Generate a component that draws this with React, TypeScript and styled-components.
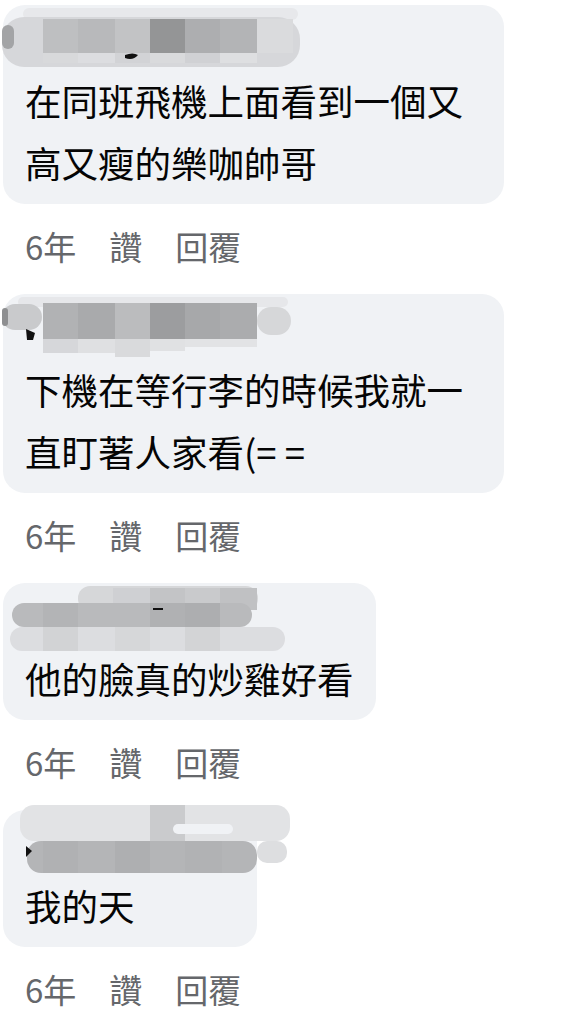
import React from "react";
import styled, { createGlobalStyle } from "styled-components";

const GlobalStyle = createGlobalStyle`
  html, body {
    margin: 0;
    padding: 0;
    background: #ffffff;
  }
  body {
    font-family: "Noto Sans CJK TC", "Noto Sans", sans-serif;
  }
`;

const Page = styled.div`
  width: 584px;
  min-height: 1024px;
  box-sizing: border-box;
  padding: 5px 0 0 3px;
  display: flex;
  flex-direction: column;
  align-items: flex-start;
  overflow: hidden;
`;

const Comment = styled.div`
  display: flex;
  flex-direction: column;
  align-items: flex-start;
  margin-bottom: 20px;
`;

const Bubble = styled.div`
  position: relative;
  max-width: 501px;
  box-sizing: border-box;
  padding: 0 22px 10px 22px;
  background: #f0f2f5;
  border-radius: 22px;
`;

const NameArea = styled.div<{ $w: number }>`
  width: ${(p) => p.$w}px;
  height: 65px;
`;

const Blur = styled.svg`
  position: absolute;
  left: 0;
  top: 0;
  overflow: visible;
  pointer-events: none;
`;

const Body = styled.div`
  font-size: 36.5px;
  line-height: 62px;
  color: #050505;
`;

const Meta = styled.div`
  display: flex;
  gap: 33px;
  margin-top: 14px;
  padding-left: 22px;
  height: 56px;
  line-height: 56px;
  font-size: 33px;
  color: #65676b;
`;

type Shape = [number, number, number, number, string, number?];

type BlurSpec = {
  shapes: Shape[];
  marks?: string[];
};

const blurs: BlurSpec[] = [
  {
    shapes: [
      [20, 3, 275, 12, "#e7e8eb", 6],
      [-1, 12, 298, 50, "#d6d7da", 22],
      [-1, 20, 12, 24, "#a3a4a6", 6],
      [40, 14, 35, 34, "#bebfc1"],
      [75, 14, 37, 34, "#b8b9bb"],
      [112, 14, 35, 34, "#c2c3c5"],
      [147, 14, 35, 34, "#949596"],
      [182, 14, 35, 34, "#adaeb0"],
      [217, 14, 37, 34, "#b3b4b6"],
      [254, 14, 36, 34, "#dadbdd"],
      [40, 48, 35, 10, "#d8d9db"],
      [75, 48, 37, 10, "#dcdde0"],
      [112, 48, 35, 10, "#d2d3d6"],
      [147, 48, 35, 10, "#d9dadc"],
      [182, 48, 35, 10, "#d0d1d4"],
      [217, 48, 37, 10, "#dedfe1"],
    ],
    marks: ["M122 50 Q130 47 135 50 Q130 56 122 53 Z"],
  },
  {
    shapes: [
      [15, 3, 270, 10, "#e6e7ea", 5],
      [-1, 10, 40, 26, "#c9cacc", 13],
      [-1, 14, 6, 18, "#8e8f91", 3],
      [40, 9, 35, 36, "#b1b2b4"],
      [75, 9, 37, 36, "#a9aaac"],
      [112, 9, 35, 36, "#bbbcbe"],
      [147, 9, 35, 36, "#9c9d9f"],
      [182, 9, 35, 36, "#a7a8aa"],
      [217, 9, 37, 36, "#abacae"],
      [254, 13, 34, 28, "#d6d7d9", 14],
      [40, 45, 35, 14, "#d6d7da"],
      [75, 45, 37, 14, "#dfe0e2"],
      [112, 45, 35, 18, "#d9dadc"],
      [147, 45, 35, 12, "#e0e1e3"],
      [182, 45, 72, 8, "#e2e3e5"],
    ],
    marks: ["M23 35 L32 39 L30 46 L24 46 Z"],
  },
  {
    shapes: [
      [75, 3, 180, 25, "#d6d7d9", 12],
      [110, 5, 37, 22, "#cfd0d3"],
      [147, 5, 35, 22, "#c3c4c6"],
      [182, 5, 35, 22, "#c9cacc"],
      [217, 5, 37, 22, "#c0c1c3"],
      [9, 20, 240, 24, "#b9babc", 12],
      [40, 20, 35, 24, "#b3b4b6"],
      [147, 20, 35, 24, "#b0b1b3"],
      [182, 20, 35, 24, "#adaeb0"],
      [7, 44, 275, 24, "#dcdde0", 12],
      [40, 44, 35, 24, "#d2d3d5"],
      [112, 44, 35, 24, "#d6d7d9"],
      [182, 44, 35, 24, "#d3d4d6"],
    ],
    marks: ["M150 25 L160 25 L160 27 L150 27 Z"],
  },
  {
    shapes: [
      [17, -5, 270, 36, "#e2e3e5", 14],
      [147, -5, 35, 36, "#cacbcd"],
      [170, 14, 60, 10, "#f0f2f5", 5],
      [24, 31, 230, 32, "#b4b5b7", 14],
      [40, 31, 35, 32, "#b0b1b3"],
      [112, 31, 35, 32, "#aeafb1"],
      [182, 31, 37, 32, "#b1b2b4"],
      [254, 31, 30, 22, "#dddee0", 10],
    ],
    marks: ["M23 36 L29 41 L23 47 Z"],
  },
];

const NameBlur: React.FC<{ spec: BlurSpec }> = ({ spec }) => (
  <Blur width="300" height="70" viewBox="0 0 300 70">
    {spec.shapes.map(([x, y, w, h, fill, rx], i) => (
      <rect key={i} x={x} y={y} width={w} height={h} fill={fill} rx={rx ?? 0} />
    ))}
    {spec.marks?.map((d, i) => (
      <path key={"m" + i} d={d} fill="#111" />
    ))}
  </Blur>
);

type CommentData = { text: string; nameWidth: number; blur: BlurSpec };

const comments: CommentData[] = [
  { text: "在同班飛機上面看到一個又高又瘦的樂咖帥哥", nameWidth: 280, blur: blurs[0] },
  { text: "下機在等行李的時候我就一直盯著人家看(= =", nameWidth: 280, blur: blurs[1] },
  { text: "他的臉真的炒雞好看", nameWidth: 280, blur: blurs[2] },
  { text: "我的天", nameWidth: 210, blur: blurs[3] },
];

export default function App() {
  return (
    <>
      <GlobalStyle />
      <Page>
        {comments.map((c, i) => (
          <Comment key={i}>
            <Bubble>
              <NameBlur spec={c.blur} />
              <NameArea $w={c.nameWidth} />
              <Body>{c.text}</Body>
            </Bubble>
            <Meta>
              <span>6年</span>
              <span>讚</span>
              <span>回覆</span>
            </Meta>
          </Comment>
        ))}
      </Page>
    </>
  );
}
